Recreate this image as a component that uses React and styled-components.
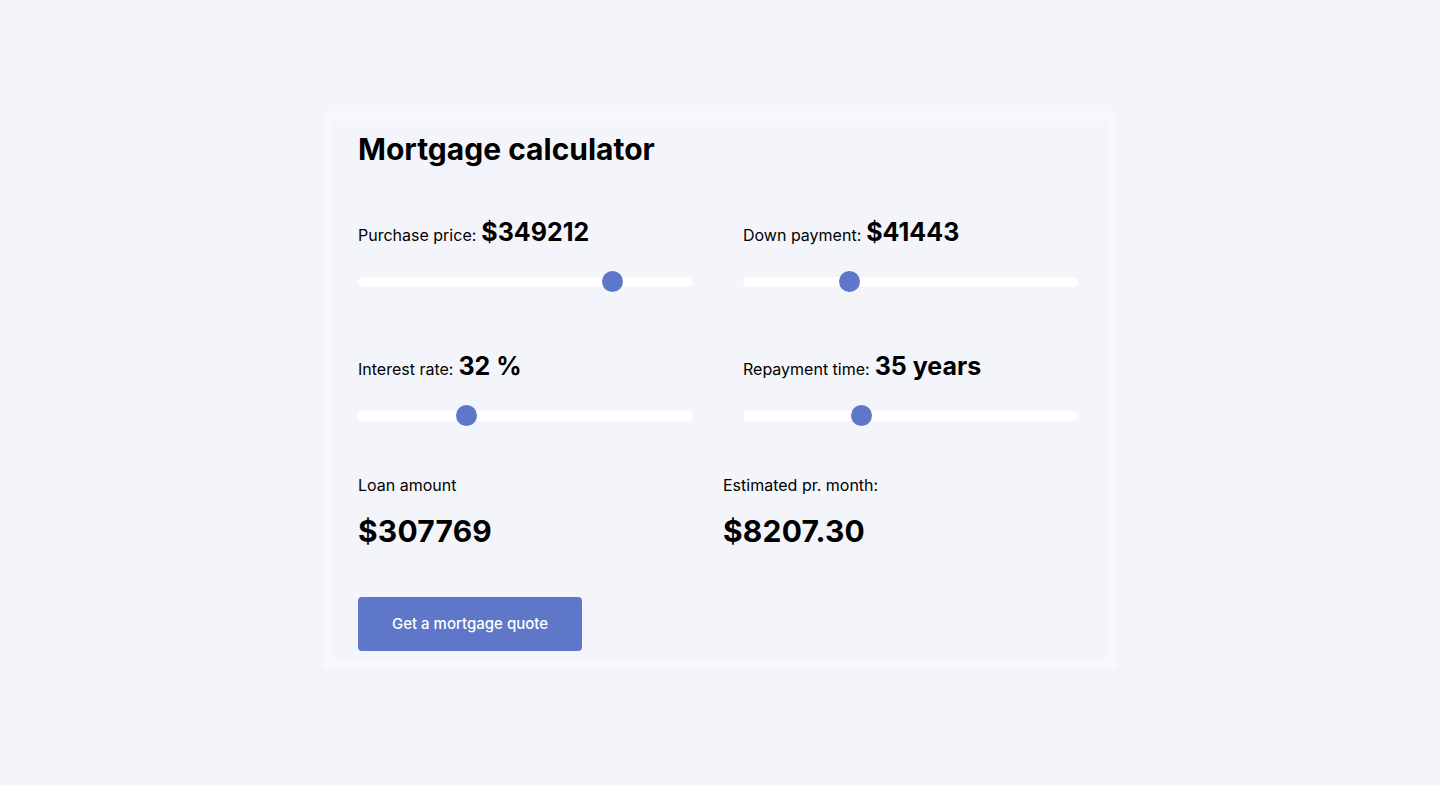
import React, { useState } from "react";
import styled, { createGlobalStyle } from "styled-components";

const GlobalStyle = createGlobalStyle`
  html, body {
    margin: 0;
    padding: 0;
    background: #f4f5fa;
    font-family: Inter, "Noto Sans", sans-serif;
    color: #000;
  }
`;

const Page = styled.div`
  min-height: 100vh;
  box-sizing: border-box;
  padding-bottom: 6px;
  display: flex;
  align-items: center;
  justify-content: center;
`;

const Frame = styled.div`
  border: 10px solid #f8f9fc;
  background: #f4f5fa;
  width: 774px;
  box-sizing: content-box;
`;

const Card = styled.div`
  padding: 10px 29px 8px 25px;
`;

const Title = styled.h1`
  margin: 0;
  font-size: 30px;
  line-height: 36px;
  font-weight: 700;
`;

const SliderGrid = styled.div`
  margin-top: 50px;
  display: grid;
  grid-template-columns: 335px 335px;
  column-gap: 50px;
  row-gap: 59px;
`;

const Field = styled.div`
  display: flex;
  flex-direction: column;
`;

const Label = styled.div`
  display: flex;
  align-items: baseline;
  font-size: 16px;
  gap: 5px;
`;

const Value = styled.span`
  font-size: 25px;
  font-weight: 700;
`;

const Range = styled.input`
  -webkit-appearance: none;
  appearance: none;
  width: 100%;
  height: 20px;
  margin: 25px 0 0;
  background: transparent;
  cursor: pointer;

  &::-webkit-slider-runnable-track {
    height: 10px;
    border-radius: 5px;
    background: #fff;
  }

  &::-webkit-slider-thumb {
    -webkit-appearance: none;
    appearance: none;
    width: 21px;
    height: 21px;
    margin-top: -5.5px;
    border-radius: 50%;
    background: #5e77c9;
    border: none;
  }

  &:focus {
    outline: none;
  }
`;

const Results = styled.div`
  margin-top: 49px;
  display: grid;
  grid-template-columns: 365px 1fr;
`;

const ResultLabel = styled.div`
  font-size: 16px;
`;

const ResultValue = styled.div`
  margin-top: 18px;
  font-size: 30px;
  font-weight: 700;
  letter-spacing: 0.2px;
`;

const QuoteButton = styled.button`
  margin-top: 48px;
  width: 224px;
  height: 54px;
  border: none;
  border-radius: 4px;
  background: #5e77c9;
  color: #fff;
  font-family: Inter, "Noto Sans", sans-serif;
  font-size: 15px;
  font-weight: 500;
  cursor: pointer;
  display: block;
`;

const Slider = ({ label, value, suffix = "", prefix = "", min, max, onChange }) => (
  <Field>
    <Label>
      {label}
      <Value>
        {prefix}
        {value}
        {suffix}
      </Value>
    </Label>
    <Range
      type="range"
      min={min}
      max={max}
      value={value}
      onChange={(e) => onChange(Number(e.target.value))}
    />
  </Field>
);

export default function App() {
  const [price, setPrice] = useState(349212);
  const [down, setDown] = useState(41443);
  const [rate, setRate] = useState(32);
  const [years, setYears] = useState(35);

  const loan = price - down;
  const r = rate / 100 / 12;
  const n = years * 12;
  const monthly = (loan * r) / (1 - Math.pow(1 + r, -n));

  return (
    <>
      <GlobalStyle />
      <Page>
        <Frame>
          <Card>
            <Title>Mortgage calculator</Title>
            <SliderGrid>
              <Slider label="Purchase price:" prefix="$" value={price} min={0} max={450000} onChange={setPrice} />
              <Slider label="Down payment:" prefix="$" value={down} min={0} max={136000} onChange={setDown} />
              <Slider label="Interest rate:" suffix=" %" value={rate} min={1} max={100} onChange={setRate} />
              <Slider label="Repayment time:" suffix=" years" value={years} min={1} max={100} onChange={setYears} />
            </SliderGrid>
            <Results>
              <div>
                <ResultLabel>Loan amount</ResultLabel>
                <ResultValue>${loan}</ResultValue>
              </div>
              <div>
                <ResultLabel>Estimated pr. month:</ResultLabel>
                <ResultValue>${monthly.toFixed(2)}</ResultValue>
              </div>
            </Results>
            <QuoteButton>Get a mortgage quote</QuoteButton>
          </Card>
        </Frame>
      </Page>
    </>
  );
}
